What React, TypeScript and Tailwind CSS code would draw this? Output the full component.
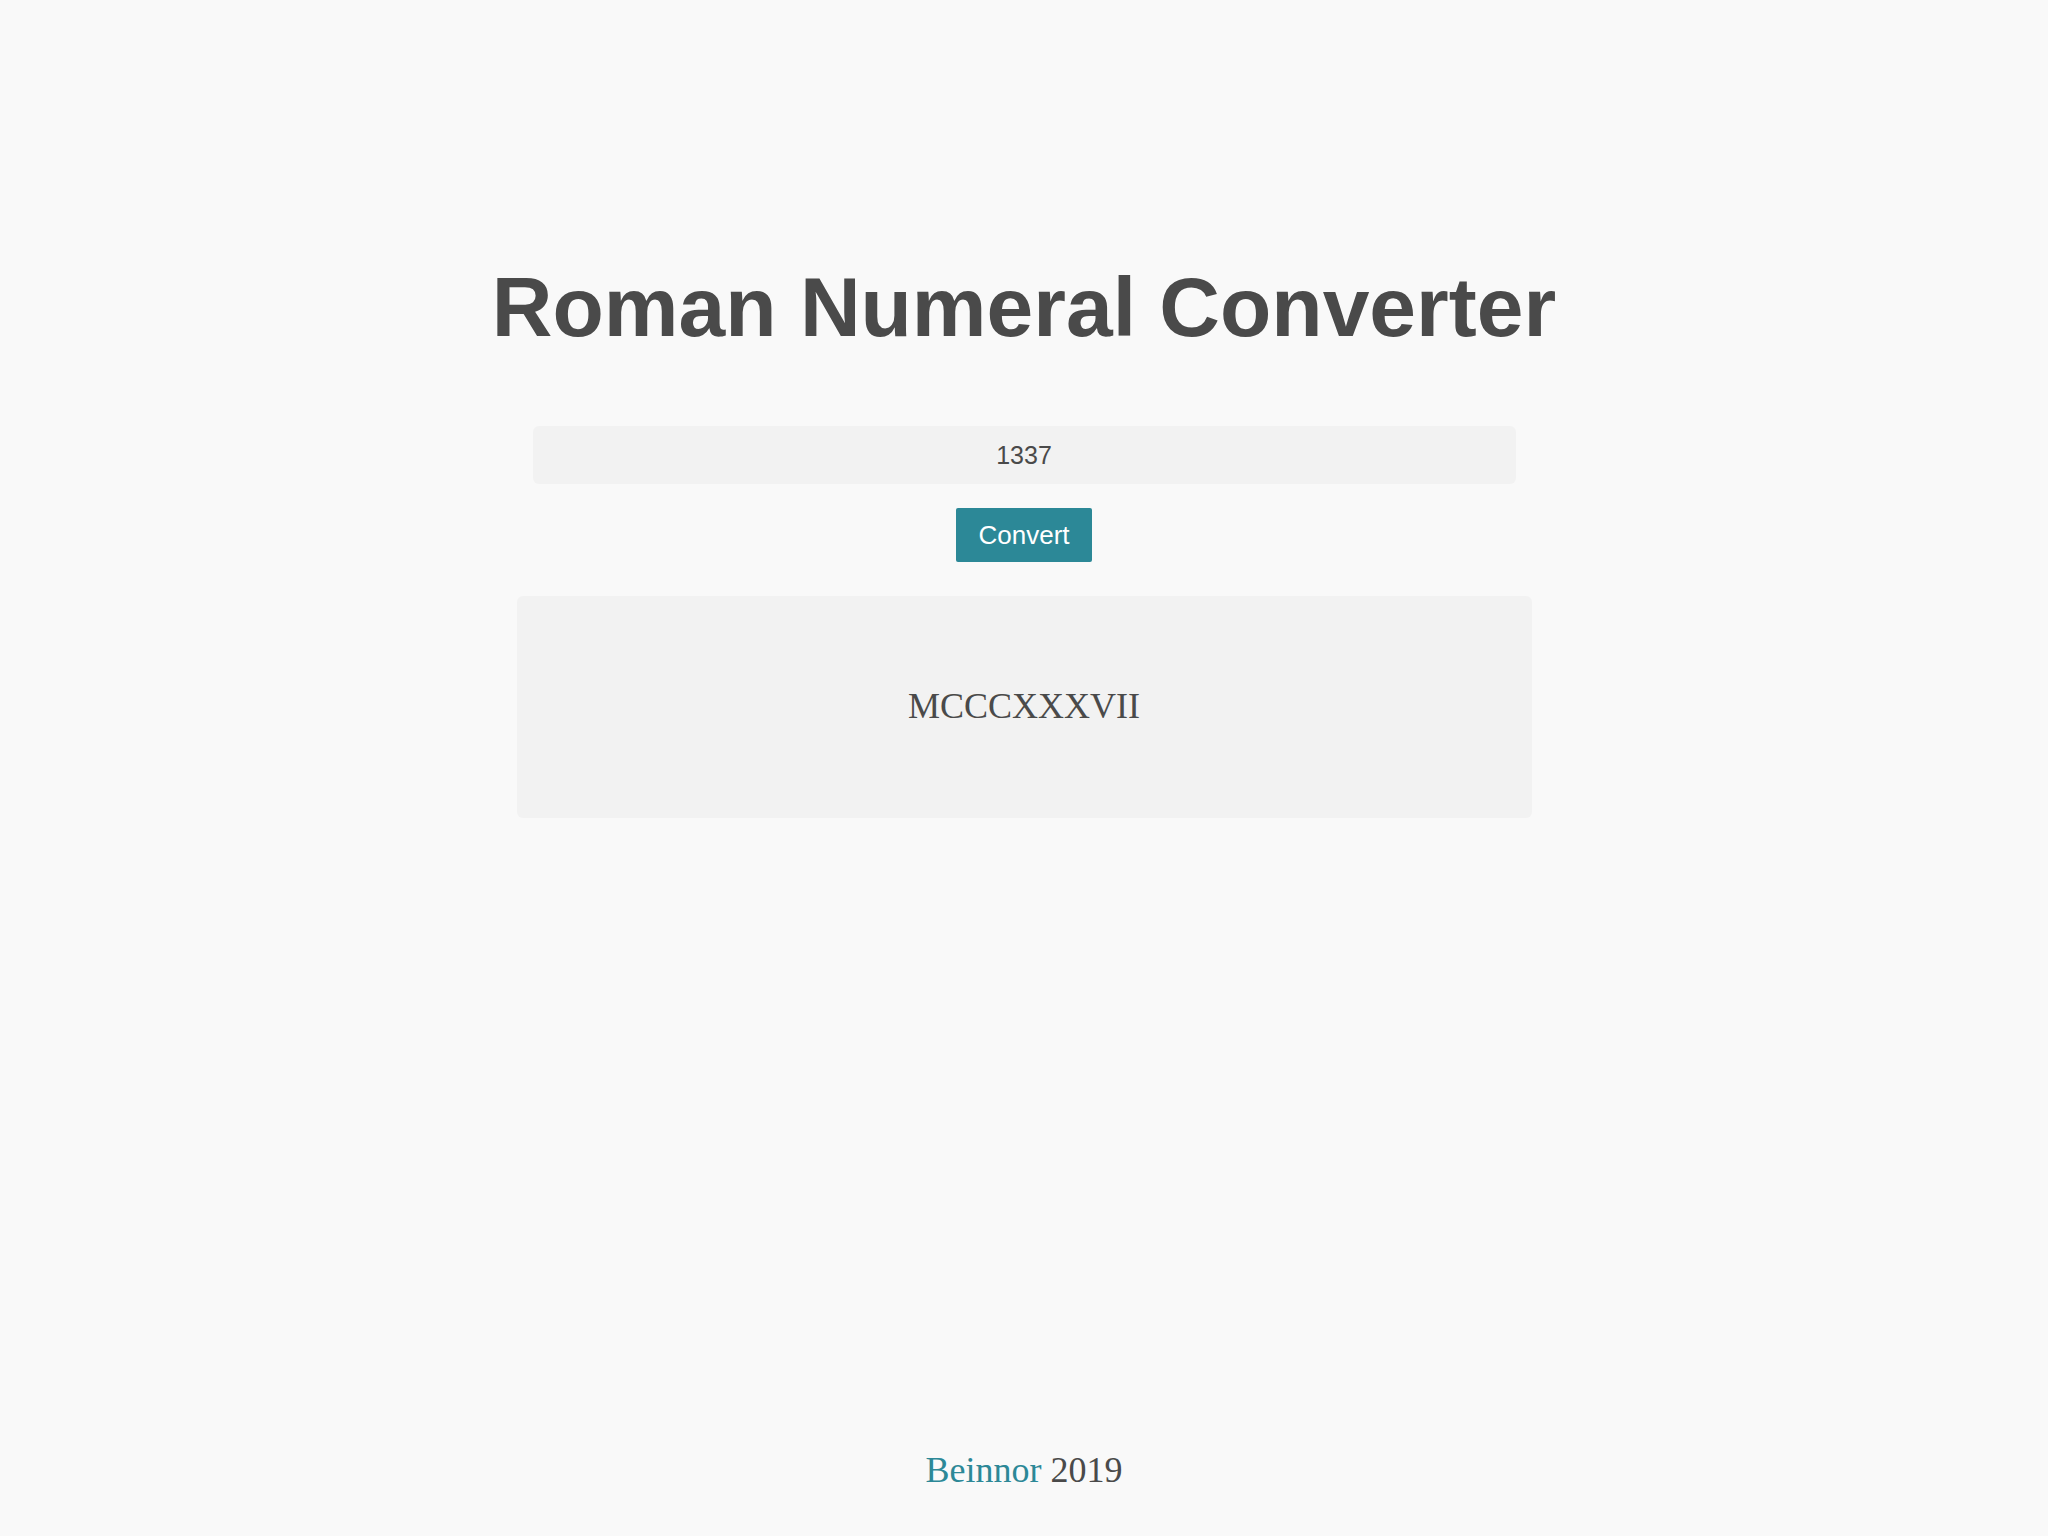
import React, { useState } from "react";

const toRoman = (num: number) => {
  const table: [number, string][] = [
    [1000, "M"], [900, "CM"], [500, "D"], [400, "CD"],
    [100, "C"], [90, "XC"], [50, "L"], [40, "XL"],
    [10, "X"], [9, "IX"], [5, "V"], [4, "IV"], [1, "I"],
  ];
  let out = "";
  for (const [value, sym] of table) {
    while (num >= value) {
      out += sym;
      num -= value;
    }
  }
  return out;
};

const App = () => {
  const [value, setValue] = useState("1337");
  const [result, setResult] = useState(toRoman(1337));

  return (
    <div className="min-h-screen flex flex-col items-center bg-[#f9f9f9] text-[#4a4a4a]">
      {/* Header */}
      <h1 className="mt-[257px] text-[84px] leading-[100px] font-bold font-['Liberation_Sans',Arial,sans-serif]">
        Roman Numeral Converter
      </h1>

      {/* Input + button */}
      <input
        className="mt-[69px] w-[983px] h-[58px] rounded-md bg-[#f2f2f2] text-center text-[25px] text-[#4a4a4a] outline-none font-['Liberation_Sans',Arial,sans-serif]"
        value={value}
        onChange={(e) => setValue(e.target.value)}
      />
      <button
        className="mt-[24px] w-[136px] h-[54px] rounded-[2px] bg-[#2c8897] text-white text-[26px] font-['Liberation_Sans',Arial,sans-serif]"
        onClick={() => setResult(toRoman(parseInt(value, 10) || 0))}
      >
        Convert
      </button>

      {/* Result */}
      <div className="mt-[34px] w-[1015px] h-[222px] rounded-md bg-[#f2f2f2] flex items-center justify-center">
        <p className="text-[36px] leading-[40px] -translate-y-px font-['Liberation_Serif','Times_New_Roman',serif]">{result}</p>
      </div>

      {/* Footer */}
      <footer className="mt-auto mb-[46px] text-[36px] leading-[40px] font-['Liberation_Serif','Times_New_Roman',serif]">
        <span className="text-[#2c8897]">Beinnor</span> 2019
      </footer>
    </div>
  );
};

export default App;
